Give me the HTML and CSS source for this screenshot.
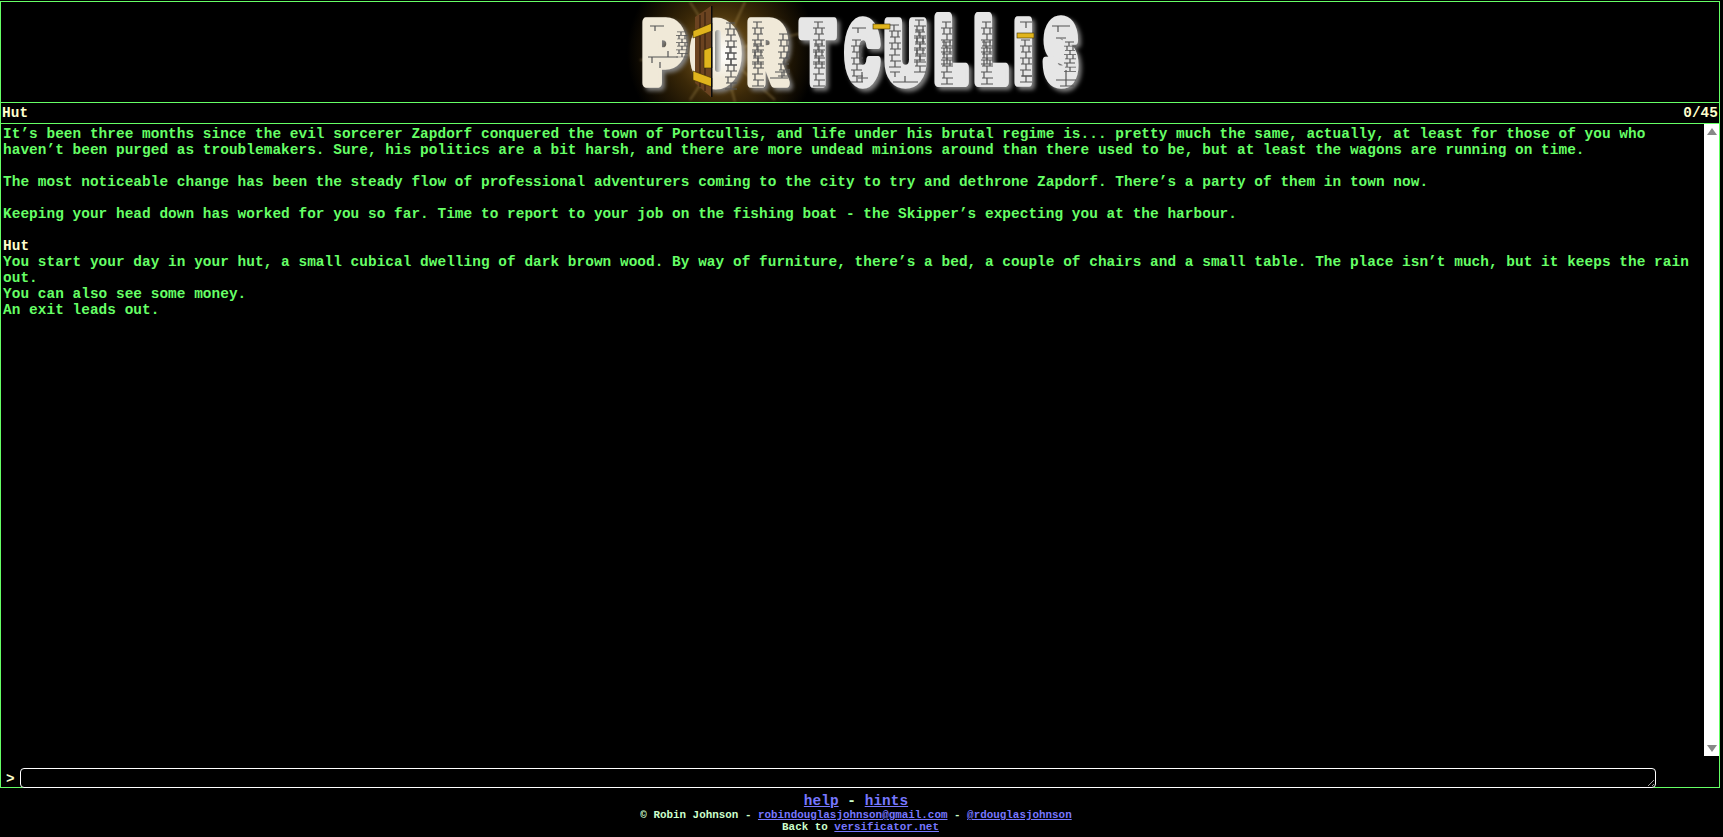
FILE: index.html
```html
<!DOCTYPE html>
<html lang="en">
<head>
<meta charset="utf-8">
<title>Portcullis</title>
<link rel="stylesheet" href="styles.css">
</head>
<body>
<main class="game">
  <header class="banner">
    <svg class="logo" viewBox="620 2 480 100" width="480" height="100" role="img" aria-label="Portcullis">
      <defs>
        <radialGradient id="glow" gradientUnits="userSpaceOnUse" cx="722" cy="52" r="95">
          <stop offset="0" stop-color="#8a6420"/>
          <stop offset="0.5" stop-color="#3a2808"/>
          <stop offset="1" stop-color="#000"/>
        </radialGradient>
        <radialGradient id="hot" gradientUnits="userSpaceOnUse" cx="726" cy="55" r="24">
          <stop offset="0" stop-color="#fff"/>
          <stop offset="1" stop-color="#fff" stop-opacity="0"/>
        </radialGradient>
        <linearGradient id="slot" x1="0" x2="1" y1="0" y2="0">
          <stop offset="0" stop-color="#8d8d88"/>
          <stop offset="1" stop-color="#e8e8e4"/>
        </linearGradient>
        <filter id="soft"><feGaussianBlur stdDeviation="0.6"/></filter>
        <filter id="blur2"><feGaussianBlur stdDeviation="1.2"/></filter>
        <g id="ladder">
          <path class="bricks" d="M1 0H10M5 0V6M0 6H12M3 6V12M9 6V12M1 12H11M6 12V18M0 18H12M3 18V24M9 18V24M1 24H12M6 24V30M0 30H11M3 30V36M1 36H12M6 36V42M0 42H12"/>
        </g>
      </defs>
      <rect x="620" y="2" width="210" height="100" fill="url(#glow)"/>
      <path class="rays" filter="url(#blur2)" d="M722 52L690 2M722 52L745 2M722 52L775 100M722 52L690 100M722 52L640 60M722 52L815 30M722 52L735 102"/>
      <g class="letters warm">
        <text transform="translate(643,83) scale(.71,.95)">P</text>
        <text class="fat" transform="translate(695,78.5) scale(.6,.79)">O</text>
        <text transform="translate(748,83) scale(.66,.95)">R</text>
      </g>
      <g class="letters cool">
        <text transform="translate(800,83) scale(.58,.95)">T</text>
        <text transform="translate(845,83) scale(.52,.95)">C</text>
        <text transform="translate(885,83) scale(.64,.95)">U</text>
        <text transform="translate(935,82) scale(.64,1)">L</text>
        <text transform="translate(975,82) scale(.64,1)">L</text>
        <text transform="translate(1015,82) scale(.64,.95)">I</text>
        <text transform="translate(1044,83) scale(.56,.95)">S</text>
      </g>
      <rect x="700" y="25" width="50" height="60" fill="url(#hot)"/>
      <rect x="715" y="30" width="6" height="42" rx="3" fill="url(#slot)"/>
      <g filter="url(#soft)">
        <use href="#ladder" x="676" y="32" transform="scale(1,.6) translate(0,21)"/>
        <path class="bricks" d="M648 57H678M652 57V63M668 51V57M650 26H664M655 26V31M660 62V68"/>
        <use href="#ladder" x="725" y="23"/>
        <use href="#ladder" x="725" y="47"/>
        <use href="#ladder" x="752" y="22"/>
        <use href="#ladder" x="752" y="44"/>
        <use href="#ladder" x="778" y="34"/>
        <path class="bricks" d="M775 72H790M782 72V78M770 78H788"/>
        <use href="#ladder" x="813" y="22"/>
        <use href="#ladder" x="813" y="44"/>
        <use href="#ladder" x="851" y="40"/>
        <path class="bricks" d="M852 28H866M858 28V33M858 78H868M862 72V82"/>
        <use href="#ladder" x="889" y="25"/>
        <path class="bricks" d="M890 72H900M895 72V77M893 82H918M905 76V82"/>
        <use href="#ladder" x="914" y="20"/>
        <use href="#ladder" x="914" y="30"/>
        <use href="#ladder" x="941" y="22"/>
        <use href="#ladder" x="941" y="42"/>
        <use href="#ladder" x="981" y="22"/>
        <use href="#ladder" x="981" y="42"/>
        <use href="#ladder" x="1020" y="40"/>
        <path class="bricks" d="M1020 22H1032M1026 22V28M1022 76H1032"/>
        <path class="bricks" d="M1052 26H1070M1058 26V32M1056 80H1076M1066 70V86M1060 86H1074M1056 38H1066"/>
        <use href="#ladder" x="1064" y="42" transform="scale(1,.7) translate(0,18)"/>
      </g>
      <polygon class="door" points="695,17 711,6 711,97 695,83"/>
      <path class="planks" d="M700 15V87M705 12V91"/>
      <polygon class="strap" points="693,31 712,23 712,31 693,38"/>
      <polygon class="strap" points="704,50 712,47 712,68 704,68"/>
      <polygon class="strap" points="693,71 712,78 712,87 693,80"/>
      <rect class="edge" x="711" y="6" width="1.5" height="91"/>
      <rect class="strap" x="873" y="24" width="17" height="5"/>
      <rect class="strap" x="1017" y="33" width="17" height="5"/>
    </svg>
  </header>
  <div class="status">
    <span class="title">Hut</span>
    <span class="score">0/45</span>
  </div>
  <section class="transcript">
    <div class="output">
      <p>It’s been three months since the evil sorcerer Zapdorf conquered the town of Portcullis, and life under his brutal regime is... pretty much the same, actually, at least for those of you who haven’t been purged as troublemakers. Sure, his politics are a bit harsh, and there are more undead minions around than there used to be, but at least the wagons are running on time.</p>
      <p>The most noticeable change has been the steady flow of professional adventurers coming to the city to try and dethrone Zapdorf. There’s a party of them in town now.</p>
      <p>Keeping your head down has worked for you so far. Time to report to your job on the fishing boat - the Skipper’s expecting you at the harbour.</p>
      <h2 class="room">Hut</h2>
      <div>You start your day in your hut, a small cubical dwelling of dark brown wood. By way of furniture, there’s a bed, a couple of chairs and a small table. The place isn’t much, but it keeps the rain out.</div>
      <div>You can also see some money.</div>
      <div>An exit leads out.</div>
    </div>
    <div class="scrollbar">
      <span class="arrow up"></span>
      <span class="arrow down"></span>
    </div>
  </section>
  <div class="command">
    <span class="prompt">&gt;</span>
    <textarea class="entry" rows="1" aria-label="Command"></textarea>
  </div>
</main>
<footer class="footer">
  <div class="nav"><a href="#">help</a> - <a href="#">hints</a></div>
  <div class="credit">© Robin Johnson - <a href="#">robindouglasjohnson@gmail.com</a> - <a href="#">@rdouglasjohnson</a></div>
  <div class="credit back">Back to <a href="#">versificator.net</a></div>
</footer>
</body>
</html>
```
FILE: styles.css
```css
* { box-sizing: border-box; }
html, body { height: 100%; }
body {
  margin: 0;
  padding-top: 1px;
  background: #000;
  color: #66ff66;
  font: bold 14.4px/16px "Liberation Mono", monospace;
  letter-spacing: .054px;
  overflow: hidden;
  display: flex;
  flex-direction: column;
}
.game {
  width: 1720px;
  height: 787px;
  flex: none;
  border: 1px solid #66ff66;
  display: flex;
  flex-direction: column;
}
.banner {
  flex: none;
  height: 101px;
  display: flex;
  justify-content: center;
  border-bottom: 1px solid #66ff66;
}
.logo { display: block; }
.letters text {
  font-family: Inter, "Liberation Sans", sans-serif;
  font-weight: 900;
  font-size: 89px;
  stroke-linejoin: round;
  stroke-width: 10px;
  paint-order: stroke;
}
.letters text.fat { stroke-width: 24px; }
.warm text { fill: #f0e9d8; stroke: #f0e9d8; }
.cool text { fill: #e6e6e6; stroke: #e6e6e6; }
.letters { filter: drop-shadow(3px 3px 2px #808080); }
.bricks { fill: none; stroke: #555; stroke-width: 1.2px; }
.rays { stroke: #d8b870; stroke-width: 2px; opacity: .3; fill: none; }
.door { fill: #6b4320; }
.planks { stroke: #2d1a08; stroke-width: 1px; fill: none; }
.strap { fill: #e0b41c; stroke: #3a2c00; stroke-width: .6px; }
.edge { fill: #0a0a0a; }
.status {
  flex: none;
  height: 21px;
  padding: 0 1px;
  display: flex;
  justify-content: space-between;
  align-items: center;
  border-bottom: 1px solid #66ff66;
  color: #ffffcc;
}
.transcript {
  flex: 1;
  min-height: 0;
  display: flex;
}
.output {
  flex: 1;
  min-width: 0;
  padding: 2px 2px 0;
}
.output p { margin: 0 0 16px; }
.room { margin: 0; font: inherit; color: #ffffcc; }
.scrollbar {
  flex: none;
  width: 15px;
  background: #fff;
  display: flex;
  flex-direction: column;
  justify-content: space-between;
}
.arrow {
  height: 15px;
  display: flex;
  align-items: center;
  justify-content: center;
}
.arrow::before {
  content: "";
  border-left: 5px solid transparent;
  border-right: 5px solid transparent;
}
.up::before { border-bottom: 7px solid #888; }
.down::before { border-top: 7px solid #888; }
.command {
  flex: none;
  height: 32px;
  display: flex;
  align-items: flex-end;
  margin-bottom: -1px;
  color: #ffffcc;
}
.prompt {
  width: 19px;
  padding: 0 0 0 5px;
  line-height: 18px;
}
.entry {
  width: 1636px;
  height: 20px;
  display: block;
  padding: 0;
  background: #000;
  border: 1px solid #fff;
  border-radius: 4px;
  color: #fff;
  font: inherit;
  outline: none;
}
.footer {
  text-align: center;
  color: #ccffcc;
  padding: 6px 11px 0 0;
}
.footer a { color: #7777ff; text-decoration: underline; }
.nav { line-height: 15px; }
.credit { font-size: 10.9px; line-height: 12px; letter-spacing: 0; }
.back { padding-left: 9px; }
```
